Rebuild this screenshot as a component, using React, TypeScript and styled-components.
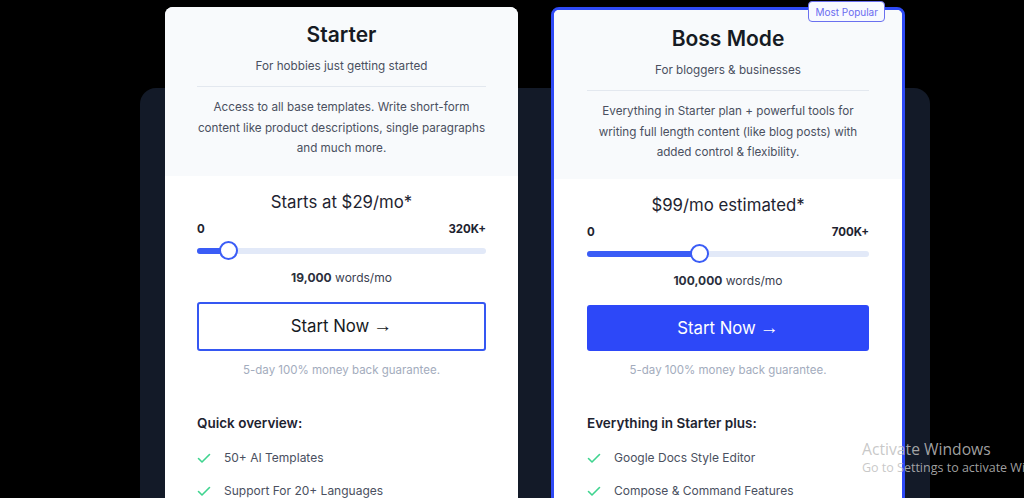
import React from "react";
import styled, { createGlobalStyle, css } from "styled-components";

const GlobalStyle = createGlobalStyle`
  html, body { margin: 0; padding: 0; background: #000; }
  body { font-family: Inter, "Noto Sans", "Liberation Sans", sans-serif; overflow: hidden; }
  * { box-sizing: border-box; }
`;

const Page = styled.div`
  position: relative;
  width: 1024px;
  height: 498px;
  overflow: hidden;
  background: #000;
  &::before {
    content: "";
    position: absolute;
    left: 140px;
    top: 88px;
    width: 790px;
    height: 600px;
    border-radius: 16px;
    background: #131a28;
  }
`;

const CardsRow = styled.div`
  position: relative;
  z-index: 1;
  display: flex;
  align-items: flex-start;
  gap: 33px;
  padding: 7px 0 0 165px;
`;

const Card = styled.div<{ $featured?: boolean }>`
  position: relative;
  width: ${(p) => (p.$featured ? 354 : 353)}px;
  background: #fff;
  border-radius: 8px;
  ${(p) =>
    p.$featured &&
    css`
      border: 3px solid #2e4af6;
    `}
`;

const Badge = styled.div`
  position: absolute;
  top: -9px;
  right: 17px;
  height: 21px;
  padding: 0 6px;
  display: flex;
  align-items: center;
  font-size: 10px;
  color: #6a6cf0;
  background: #f8faff;
  border: 1px solid #6a70ef;
  border-radius: 4px;
`;

const Header = styled.div<{ $featured?: boolean }>`
  background: #f8fafc;
  border-radius: ${(p) => (p.$featured ? "5px 5px 0 0" : "8px 8px 0 0")};
  padding: 14px ${(p) => (p.$featured ? 33 : 32)}px ${(p) => (p.$featured ? 16 : 17)}px;
  text-align: center;
`;

const Title = styled.h2<{ $featured?: boolean }>`
  margin: 0;
  font-size: 21px;
  line-height: 28px;
  font-weight: 600;
  color: #161a23;
  ${(p) => p.$featured && css`margin-top: 1px;`}
`;

const Subtitle = styled.p`
  margin: 8px 0 0;
  font-size: 11.7px;
  line-height: 18px;
  color: #4a5060;
`;

const Divider = styled.hr`
  margin: 11px 0 0;
  border: 0;
  height: 1px;
  background: #e3e8ef;
`;

const Description = styled.p`
  margin: 10px 0 0;
  font-size: 11.7px;
  line-height: 20.5px;
  color: #4a5060;
  white-space: nowrap;
`;

const Body = styled.div<{ $featured?: boolean }>`
  padding: 14px ${(p) => (p.$featured ? 33 : 32)}px 0;
  height: 340px;
`;

const Price = styled.div`
  text-align: center;
  font-size: 16.8px;
  line-height: 24px;
  color: #1e2330;
`;

const RangeLabels = styled.div`
  display: flex;
  justify-content: space-between;
  margin-top: 7px;
  font-size: 11.5px;
  line-height: 16px;
  font-weight: 700;
  color: #1e2330;
`;

const SliderBox = styled.div`
  position: relative;
  margin-top: 4px;
  height: 20px;
  display: flex;
  align-items: center;
`;

const Track = styled.div`
  position: relative;
  width: 100%;
  height: 6px;
  border-radius: 3px;
  background: #e2e9f8;
`;

const Fill = styled.div`
  position: absolute;
  left: 0;
  top: 0;
  bottom: 0;
  border-radius: 3px;
  background: #3a5cf6;
`;

const Thumb = styled.div`
  position: absolute;
  top: 50%;
  width: 19px;
  height: 19px;
  margin: -9.5px 0 0 -9.5px;
  border-radius: 50%;
  background: #fff;
  border: 2px solid #3a5cf6;
`;

const Words = styled.div`
  margin-top: 8px;
  text-align: center;
  font-size: 12px;
  line-height: 18px;
  color: #3b4150;
  b { font-weight: 700; color: #2a2f3c; }
`;

const StartButton = styled.button<{ $featured?: boolean }>`
  display: flex;
  align-items: center;
  justify-content: center;
  gap: 4px;
  width: 100%;
  margin-top: 15px;
  font-family: inherit;
  font-size: 16.8px;
  cursor: pointer;
  border-radius: 3px;
  ${(p) =>
    p.$featured
      ? css`
          height: 46px;
          border: 0;
          background: #2d48f8;
          color: #fff;
        `
      : css`
          height: 49px;
          border: 2px solid #3557f2;
          background: #fff;
          color: #161a23;
        `}
`;

const Arrow = styled.span`
  font-family: "Liberation Sans", sans-serif;
  font-size: 19px;
`;

const Guarantee = styled.div`
  margin-top: 10px;
  text-align: center;
  font-size: 11.5px;
  line-height: 18px;
  color: #a3acbd;
`;

const ListHeading = styled.div`
  margin-top: 34px;
  font-size: 13.5px;
  line-height: 20px;
  font-weight: 600;
  color: #1e2330;
`;

const FeatureList = styled.ul`
  list-style: none;
  margin: 15px 0 0;
  padding: 0;
  display: flex;
  flex-direction: column;
  gap: 13px;
`;

const Feature = styled.li`
  display: flex;
  align-items: center;
  gap: 13px;
  height: 20px;
  font-size: 12px;
  color: #4a5060;
  svg { flex: none; }
`;

const Watermark = styled.div`
  position: absolute;
  z-index: 2;
  left: 862px;
  top: 439px;
  white-space: nowrap;
  font-family: "Open Sans", "Liberation Sans", sans-serif;
  color: rgba(190, 190, 190, 0.85);
  pointer-events: none;
`;

const WmTitle = styled.div`
  font-size: 15.7px;
  line-height: 20px;
`;

const WmSub = styled.div`
  font-size: 12.5px;
  line-height: 18px;
`;

const Check = () => (
  <svg width="14" height="14" viewBox="0 0 14 14" fill="none">
    <path d="M1.5 7.5 L5 11 L12.5 3.5" stroke="#3fd48f" strokeWidth="1.6" strokeLinecap="round" strokeLinejoin="round" />
  </svg>
);

type Plan = {
  title: string;
  subtitle: string;
  desc: string[];
  price: string;
  max: string;
  pct: number;
  words: string;
  heading: string;
  features: string[];
  featured?: boolean;
};

const plans: Plan[] = [
  {
    title: "Starter",
    subtitle: "For hobbies just getting started",
    desc: [
      "Access to all base templates. Write short-form",
      "content like product descriptions, single paragraphs",
      "and much more.",
    ],
    price: "Starts at $29/mo*",
    max: "320K+",
    pct: 10.8,
    words: "19,000",
    heading: "Quick overview:",
    features: ["50+ AI Templates", "Support For 20+ Languages"],
  },
  {
    title: "Boss Mode",
    subtitle: "For bloggers & businesses",
    desc: [
      "Everything in Starter plan + powerful tools for",
      "writing full length content (like blog posts) with",
      "added control & flexibility.",
    ],
    price: "$99/mo estimated*",
    max: "700K+",
    pct: 40,
    words: "100,000",
    heading: "Everything in Starter plus:",
    features: ["Google Docs Style Editor", "Compose & Command Features"],
    featured: true,
  },
];

const PlanCard = ({ plan }: { plan: Plan }) => (
  <Card $featured={plan.featured}>
    {plan.featured && <Badge>Most Popular</Badge>}
    <Header $featured={plan.featured}>
      <Title $featured={plan.featured}>{plan.title}</Title>
      <Subtitle>{plan.subtitle}</Subtitle>
      <Divider />
      <Description>
        {plan.desc.map((l, i) => (
          <React.Fragment key={i}>
            {l}
            {i < plan.desc.length - 1 && <br />}
          </React.Fragment>
        ))}
      </Description>
    </Header>
    <Body $featured={plan.featured}>
      <Price>{plan.price}</Price>
      <RangeLabels>
        <span>0</span>
        <span>{plan.max}</span>
      </RangeLabels>
      <SliderBox>
        <Track>
          <Fill style={{ width: `${plan.pct}%` }} />
          <Thumb style={{ left: `${plan.pct}%` }} />
        </Track>
      </SliderBox>
      <Words>
        <b>{plan.words}</b> words/mo
      </Words>
      <StartButton $featured={plan.featured}>
        Start Now <Arrow>→</Arrow>
      </StartButton>
      <Guarantee>5-day 100% money back guarantee.</Guarantee>
      <ListHeading>{plan.heading}</ListHeading>
      <FeatureList>
        {plan.features.map((f) => (
          <Feature key={f}>
            <Check />
            {f}
          </Feature>
        ))}
      </FeatureList>
    </Body>
  </Card>
);

export default function App() {
  return (
    <>
      <GlobalStyle />
      <Page>
        <CardsRow>
          {plans.map((p) => (
            <PlanCard key={p.title} plan={p} />
          ))}
        </CardsRow>
        <Watermark>
          <WmTitle>Activate Windows</WmTitle>
          <WmSub>Go to Settings to activate Windows.</WmSub>
        </Watermark>
      </Page>
    </>
  );
}
